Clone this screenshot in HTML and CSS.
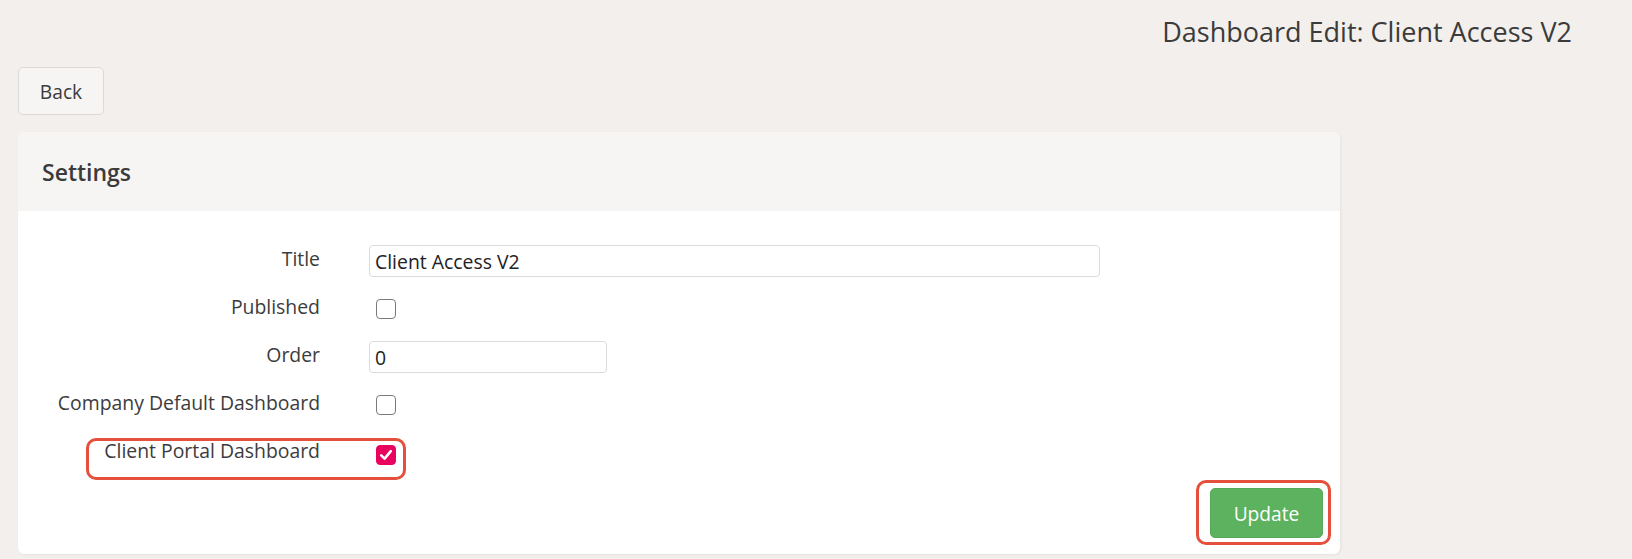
FILE: index.html
```html
<!DOCTYPE html>
<html lang="en">
<head>
<meta charset="utf-8">
<title>Dashboard Edit: Client Access V2</title>
<link rel="stylesheet" href="styles.css">
</head>
<body>
<div class="page">
  <header class="topbar">
    <h1 class="page-title">Dashboard Edit: Client Access V2</h1>
  </header>
  <div class="toolbar">
    <button class="btn btn-default" type="button">Back</button>
  </div>
  <section class="card">
    <div class="card-header">
      <h2 class="card-title">Settings</h2>
    </div>
    <div class="card-body">
      <form class="form-grid">
        <label class="form-label" for="title">Title</label>
        <div class="form-control-cell"><input id="title" class="text-input wide" type="text" value="Client Access V2"></div>

        <label class="form-label" for="published">Published</label>
        <div class="form-control-cell"><span class="checkbox" id="published"></span></div>

        <label class="form-label" for="order">Order</label>
        <div class="form-control-cell"><input id="order" class="text-input narrow" type="text" value="0"></div>

        <label class="form-label" for="companydefault">Company Default Dashboard</label>
        <div class="form-control-cell"><span class="checkbox" id="companydefault"></span></div>

        <div class="highlight-row">
          <label class="form-label" for="clientportal">Client Portal Dashboard</label>
          <div class="form-control-cell">
            <span class="checkbox checked" id="clientportal">
              <svg viewBox="0 0 20 20" width="20" height="20" aria-hidden="true"><path d="M5.2 10.4 L8.6 13.6 L14.8 6.2" fill="none" stroke="#fff" stroke-width="2.6" stroke-linecap="round" stroke-linejoin="round"/></svg>
            </span>
          </div>
          <span class="annotation annotation-row"></span>
        </div>
      </form>
      <div class="card-footer">
        <div class="btn-wrap">
          <button class="btn btn-success" type="button">Update</button>
          <span class="annotation annotation-btn"></span>
        </div>
      </div>
    </div>
  </section>
</div>
</body>
</html>
```
FILE: styles.css
```css
* { box-sizing: border-box; }
html, body { margin: 0; padding: 0; }
body {
  background: #f2efec;
  font-family: "Open Sans", "Noto Sans", "Liberation Sans", sans-serif;
  color: #3c3c3c;
  width: 1632px;
  height: 559px;
  overflow: hidden;
}
.page {
  padding: 0 0 0 18px;
}
.topbar {
  display: flex;
  justify-content: flex-end;
  padding: 14px 60px 0 0;
  height: 67px;
}
.page-title {
  margin: 0;
  font-size: 27px;
  font-weight: 400;
  line-height: 36px;
  color: #3b3b3b;
}
.toolbar {
  height: 65px;
}
.btn {
  font-family: inherit;
  font-size: 19.2px;
  border-radius: 5px;
  cursor: pointer;
}
.btn-default {
  width: 86px;
  height: 48px;
  background: #f7f5f3;
  border: 1px solid #dcd9d6;
  color: #3c3c3c;
  padding: 0;
}
.card {
  width: 1322px;
  height: 422px;
  background: #fff;
  border-radius: 6px;
  box-shadow: 1px 1px 3px rgba(0,0,0,0.06);
}
.card-header {
  height: 79px;
  background: #f7f5f3;
  border-radius: 6px 6px 0 0;
  display: flex;
  align-items: center;
  padding-left: 24px;
}
.card-title {
  margin: 0;
  font-size: 23px;
  font-weight: 600;
  color: #3b3b3b;
  padding-top: 1px;
}
.card-body {
  padding: 26px 17px 16px 0;
}
.form-grid {
  display: grid;
  grid-template-columns: 302px 1fr;
  grid-auto-rows: 48px;
  column-gap: 49px;
  align-items: center;
}
.form-label {
  text-align: right;
  font-size: 19.4px;
  color: #3c3c3c;
  padding-bottom: 5px;
}
.form-control-cell {
  display: flex;
  align-items: center;
}
.text-input {
  height: 32px;
  border: 1px solid #dedbd8;
  border-radius: 4px;
  font-family: inherit;
  font-size: 19.4px;
  color: #222;
  padding: 0 5px;
  background: #fff;
}
.wide { width: 731px; }
.narrow { width: 238px; }
.checkbox {
  display: inline-flex;
  width: 20px;
  height: 20px;
  border: 1.5px solid #7b7b7b;
  border-radius: 4px;
  margin-left: 7px;
  background: #fff;
}
.checkbox.checked {
  background: #e8035f;
  border-color: #e8035f;
  align-items: center;
  justify-content: center;
  margin-top: 4px;
}
.checkbox.checked svg { margin: -1.5px; }
.highlight-row {
  grid-column: 1 / 3;
  display: grid;
  grid-template-columns: 302px 1fr;
  column-gap: 49px;
  align-items: center;
  position: relative;
  height: 48px;
}
.annotation {
  position: absolute;
  border: 3px solid #e5503c;
  border-radius: 10px;
  pointer-events: none;
}
.annotation-row {
  left: 68px;
  width: 320px;
  top: 9px;
  height: 42px;
}
.card-footer {
  display: flex;
  justify-content: flex-end;
  margin-top: 11px;
}
.btn-wrap {
  position: relative;
}
.btn-success {
  display: block;
  width: 113px;
  height: 50px;
  background: #5cb25e;
  border: 1px solid #55a957;
  color: #fff;
  padding: 0;
}
.annotation-btn {
  left: -14px;
  right: -8px;
  top: -8px;
  bottom: -7px;
}
```
